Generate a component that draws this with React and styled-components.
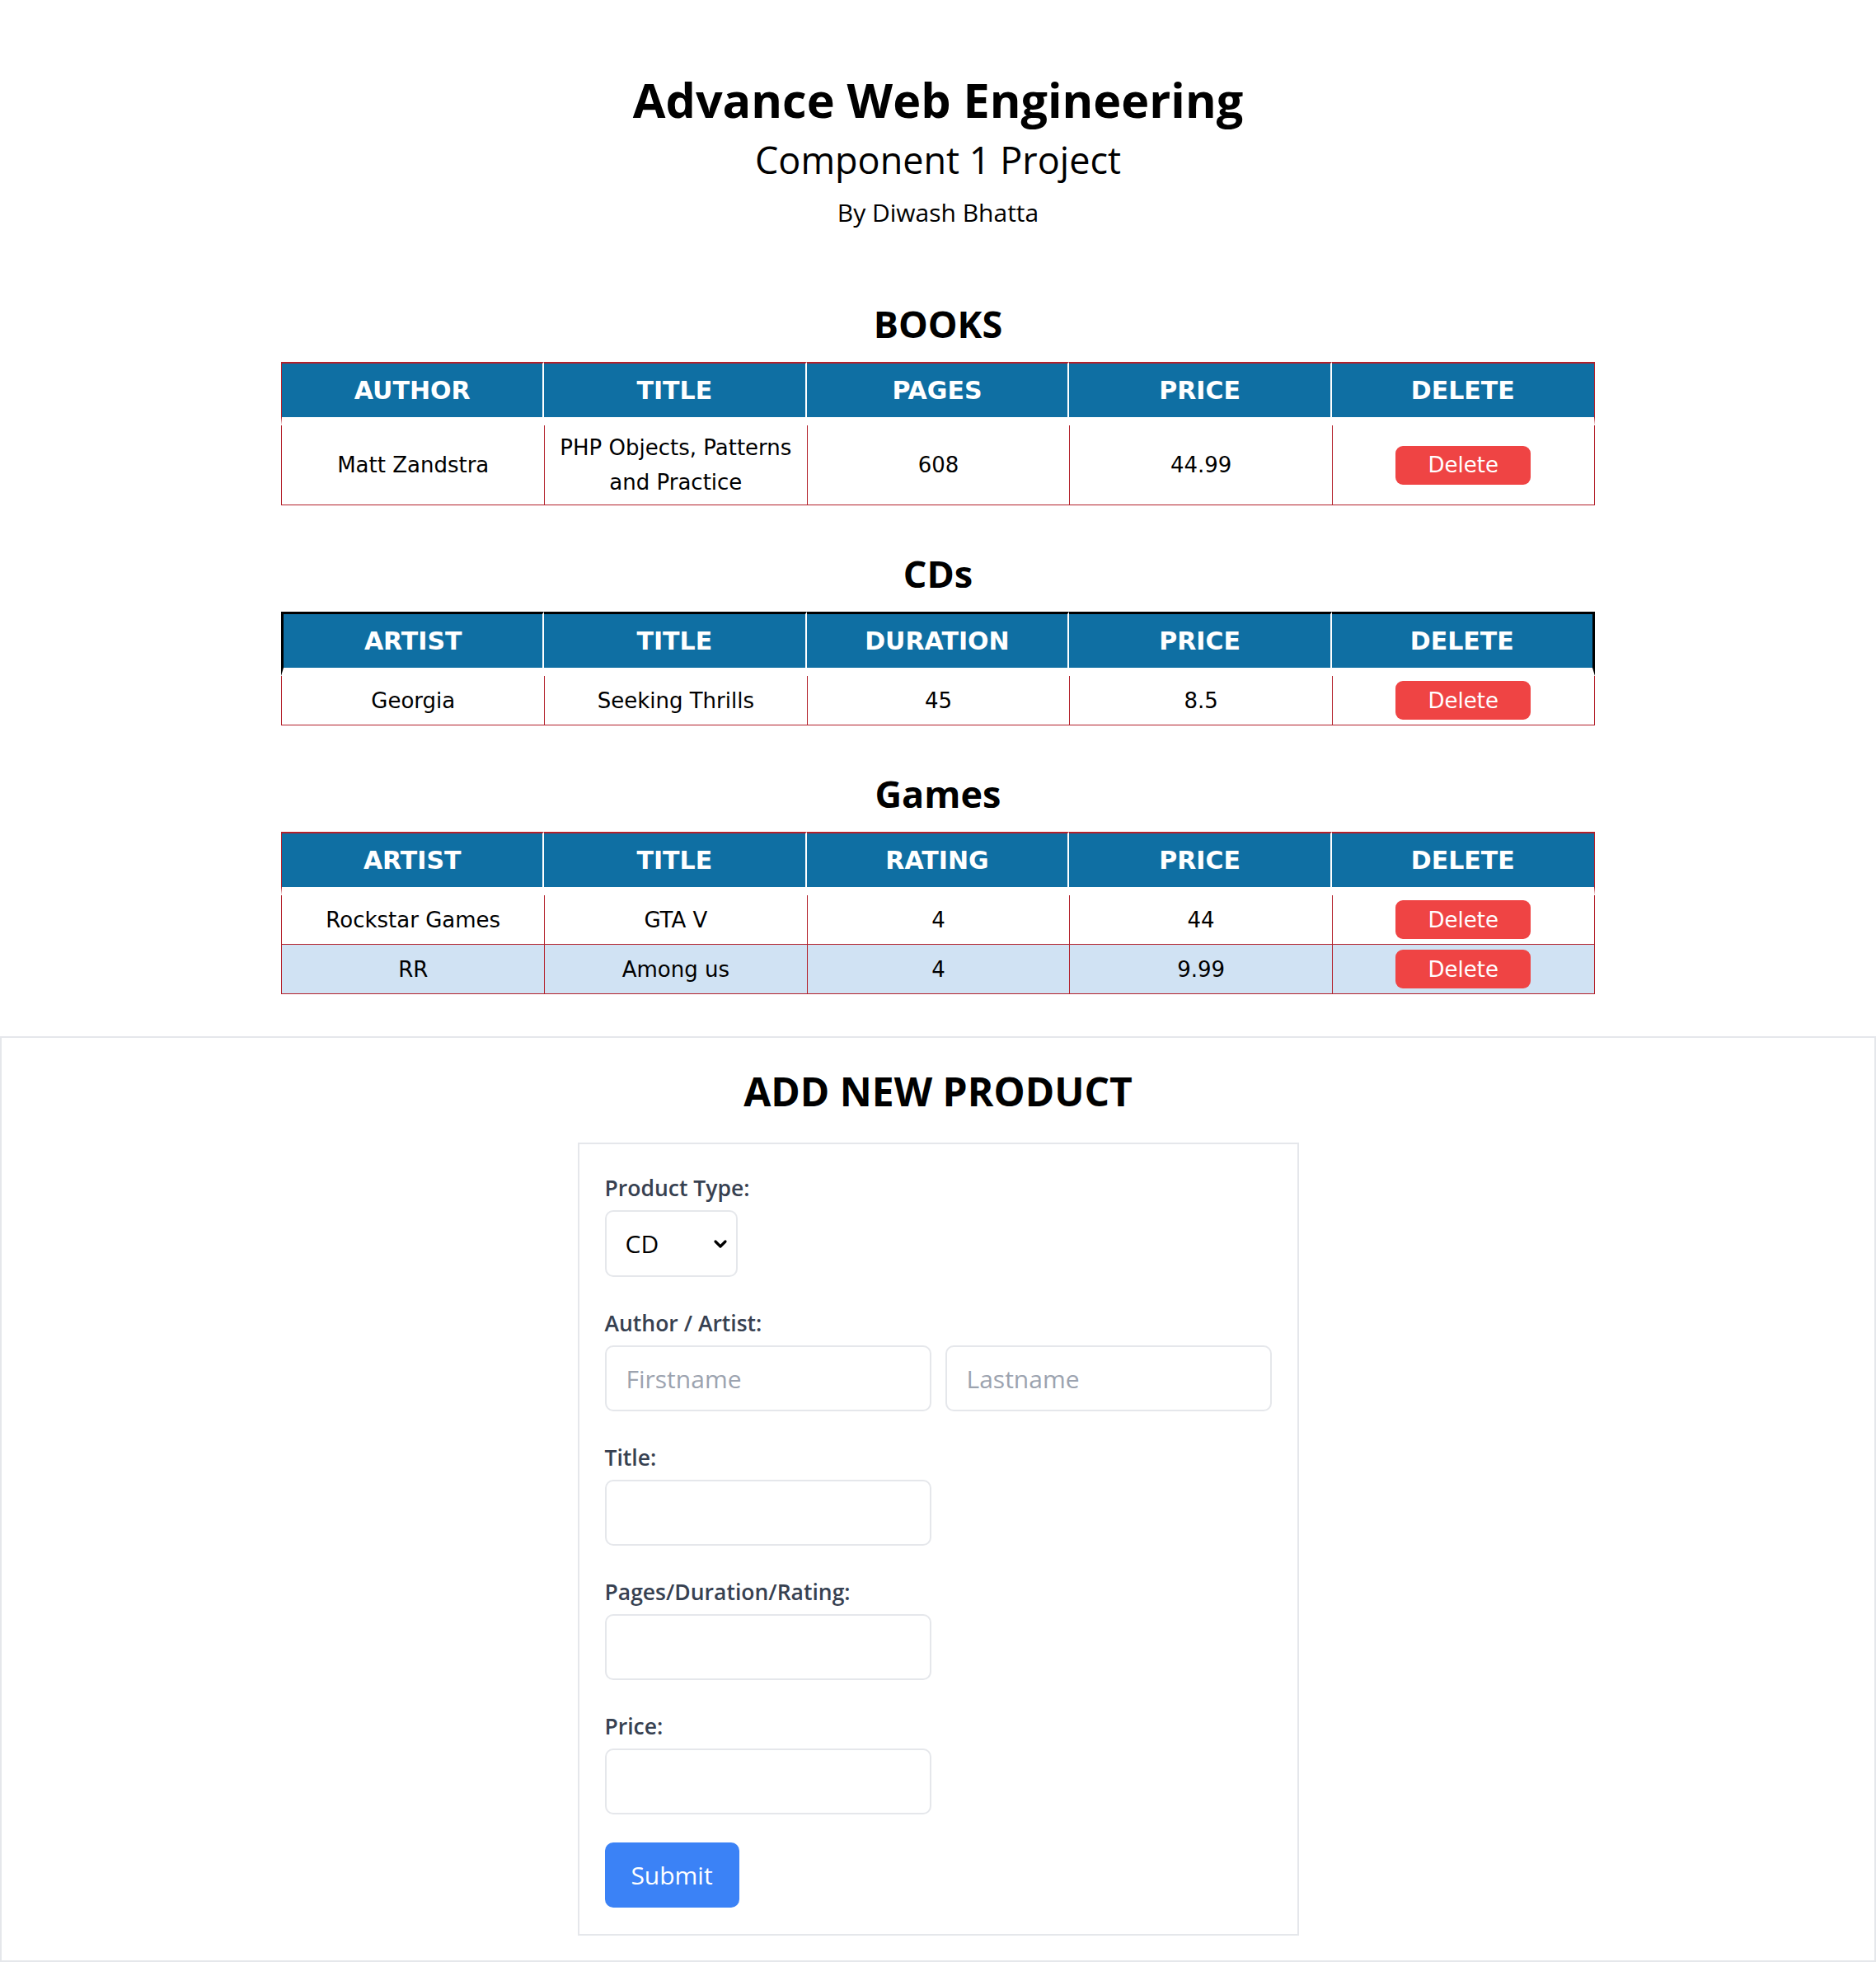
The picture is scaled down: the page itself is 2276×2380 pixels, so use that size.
import React from "react";
import styled, { createGlobalStyle } from "styled-components";
import { ChevronDown } from "lucide-react";

const GlobalStyle = createGlobalStyle`
  * { box-sizing: border-box; }
  body {
    margin: 0;
    background: #fff;
    color: #000;
    font-family: "Open Sans", "Noto Sans", sans-serif;
  }
`;

const books = [
  { id: 1, author: "Matt Zandstra", title: "PHP Objects, Patterns and Practice", pages: 608, price: 44.99 },
];
const cds = [{ id: 1, artist: "Georgia", title: "Seeking Thrills", duration: 45, price: 8.5 }];
const games = [
  { id: 1, artist: "Rockstar Games", title: "GTA V", rating: 4, price: 44 },
  { id: 2, artist: "RR", title: "Among us", rating: 4, price: 9.99 },
];

export default function App() {
  return (
    <>
      <GlobalStyle />
      <Header>
        <Title>Advance Web Engineering</Title>
        <Subtitle>Component 1 Project</Subtitle>
        <Byline>By Diwash Bhatta</Byline>
      </Header>

      <Catalog>
        <SectionTitle $first>BOOKS</SectionTitle>
        <ProductTable
          columns={["AUTHOR", "TITLE", "PAGES", "PRICE", "DELETE"]}
          rows={books.map((b) => [b.author, b.title, b.pages, b.price])}
        />

        <SectionTitle>CDs</SectionTitle>
        <ProductTable
          dark
          columns={["ARTIST", "TITLE", "DURATION", "PRICE", "DELETE"]}
          rows={cds.map((c) => [c.artist, c.title, c.duration, c.price])}
        />

        <SectionTitle>Games</SectionTitle>
        <ProductTable
          columns={["ARTIST", "TITLE", "RATING", "PRICE", "DELETE"]}
          rows={games.map((g) => [g.artist, g.title, g.rating, g.price])}
        />
      </Catalog>

      <FormSection>
        <FormTitle>ADD NEW PRODUCT</FormTitle>
        <Card onSubmit={(e) => e.preventDefault()}>
          <Field>
            <Label>Product Type:</Label>
            <SelectWrap>
              <Select defaultValue="cd">
                <option value="book">Book</option>
                <option value="cd">CD</option>
                <option value="game">Game</option>
              </Select>
              <Chevron size={24} strokeWidth={3.2} />
            </SelectWrap>
          </Field>
          <Field>
            <Label>Author / Artist:</Label>
            <InputRow>
              <Input placeholder="Firstname" />
              <Input placeholder="Lastname" />
            </InputRow>
          </Field>
          <Field>
            <Label>Title:</Label>
            <InputRow>
              <Input />
            </InputRow>
          </Field>
          <Field>
            <Label>Pages/Duration/Rating:</Label>
            <InputRow>
              <Input />
            </InputRow>
          </Field>
          <Field>
            <Label>Price:</Label>
            <InputRow>
              <Input />
            </InputRow>
          </Field>
          <SubmitButton type="submit">Submit</SubmitButton>
        </Card>
      </FormSection>
    </>
  );
}

function ProductTable({ columns, rows, dark }) {
  return (
    <Table>
      <thead>
        <tr>
          {columns.map((c) => (
            <Th key={c} $dark={dark}>
              {c}
            </Th>
          ))}
        </tr>
      </thead>
      <tbody>
        {rows.map((r, i) => (
          <Row key={i} $alt={i % 2 === 1}>
            {r.map((v, j) => (
              <Td key={j}>{v}</Td>
            ))}
            <Td>
              <DeleteButton>Delete</DeleteButton>
            </Td>
          </Row>
        ))}
      </tbody>
    </Table>
  );
}

const Header = styled.header`
  text-align: center;
  padding-top: 85px;
`;
const Title = styled.h1`
  margin: 0;
  font-size: 57.5px;
  line-height: 72px;
  font-weight: 700;
`;
const Subtitle = styled.h2`
  margin: 9px 0 0;
  font-size: 45px;
  line-height: 56px;
  font-weight: 400;
`;
const Byline = styled.p`
  margin: 16px 0 0;
  font-size: 30px;
  line-height: 40px;
`;

const Catalog = styled.main`
  display: flex;
  flex-direction: column;
  align-items: center;
  padding-bottom: 51px;
`;
const SectionTitle = styled.h2`
  margin: ${({ $first }) => ($first ? "87px" : "55px")} 0 18px;
  font-size: 45px;
  line-height: 56px;
  font-weight: 700;
`;

const RED = "#b3202a";
const Table = styled.table`
  width: 70%;
  table-layout: fixed;
  border-collapse: separate;
  border-spacing: 0;
  font-family: "DejaVu Sans", Verdana, sans-serif;
`;
const Th = styled.th`
  background: #0f6fa3;
  color: #fff;
  font-size: 30px;
  font-weight: 700;
  line-height: 41px;
  padding: 12px 8px;
  border-top: ${({ $dark }) => ($dark ? "3px solid #000" : `2px solid ${RED}`)};
  border-right: 2px solid #fff;
  border-bottom: 10px solid #fff;
  &:first-child {
    border-left: ${({ $dark }) => ($dark ? "3px solid #000" : `1px solid ${RED}`)};
  }
  &:last-child {
    border-right: ${({ $dark }) => ($dark ? "3px solid #000" : `1px solid ${RED}`)};
  }
`;
const Row = styled.tr`
  background: ${({ $alt }) => ($alt ? "#d0e2f3" : "#fff")};
`;
const Td = styled.td`
  text-align: center;
  font-size: 26px;
  line-height: 42px;
  padding: 6px 15px;
  border-left: 1px solid ${RED};
  border-bottom: 1px solid ${RED};
  &:last-child {
    border-right: 1px solid ${RED};
  }
`;
const DeleteButton = styled.button`
  display: inline-flex;
  align-items: center;
  justify-content: center;
  vertical-align: middle;
  width: 164px;
  height: 47px;
  border: none;
  border-radius: 9px;
  background: #ef4444;
  color: #fff;
  font-family: "DejaVu Sans", Verdana, sans-serif;
  font-size: 26px;
  cursor: pointer;
`;

const FormSection = styled.section`
  border: 2px solid #e5e7eb;
  padding: 35px 0 30px;
  display: flex;
  flex-direction: column;
  align-items: center;
`;
const FormTitle = styled.h2`
  margin: 0 0 32px;
  font-size: 48px;
  line-height: 60px;
  font-weight: 700;
`;
const Card = styled.form`
  width: 875px;
  border: 2px solid #e5e7eb;
  padding: 35px 31px 32px;
  display: flex;
  flex-direction: column;
`;
const Field = styled.div`
  display: flex;
  flex-direction: column;
  gap: 9px;
  & + & {
    margin-top: 38px;
  }
`;
const Label = styled.label`
  font-size: 26.5px;
  line-height: 36px;
  font-weight: 600;
  color: #374151;
`;
const SelectWrap = styled.div`
  position: relative;
  width: 161px;
`;
const Select = styled.select`
  appearance: none;
  width: 161px;
  height: 81px;
  padding: 0 40px 0 23px;
  border: 2px solid #e5e7eb;
  border-radius: 10px;
  background: #fff;
  color: #000;
  font-family: inherit;
  font-size: 30px;
`;
const Chevron = styled(ChevronDown)`
  position: absolute;
  right: 9px;
  top: 50%;
  transform: translateY(-50%);
  color: #000;
  pointer-events: none;
`;
const InputRow = styled.div`
  display: grid;
  grid-template-columns: minmax(0, 1fr) minmax(0, 1fr);
  gap: 17px;
`;
const Input = styled.input`
  width: 100%;
  min-width: 0;
  height: 80px;
  border: 2px solid #e5e7eb;
  border-radius: 10px;
  padding: 0 24px;
  font-family: inherit;
  font-size: 30px;
  color: #111827;
  &::placeholder {
    color: #9ca3af;
  }
`;
const SubmitButton = styled.button`
  align-self: flex-start;
  margin-top: 34px;
  width: 163px;
  height: 79px;
  border: none;
  border-radius: 10px;
  background: #3b82f6;
  color: #fff;
  font-family: inherit;
  font-size: 30px;
  cursor: pointer;
`;
